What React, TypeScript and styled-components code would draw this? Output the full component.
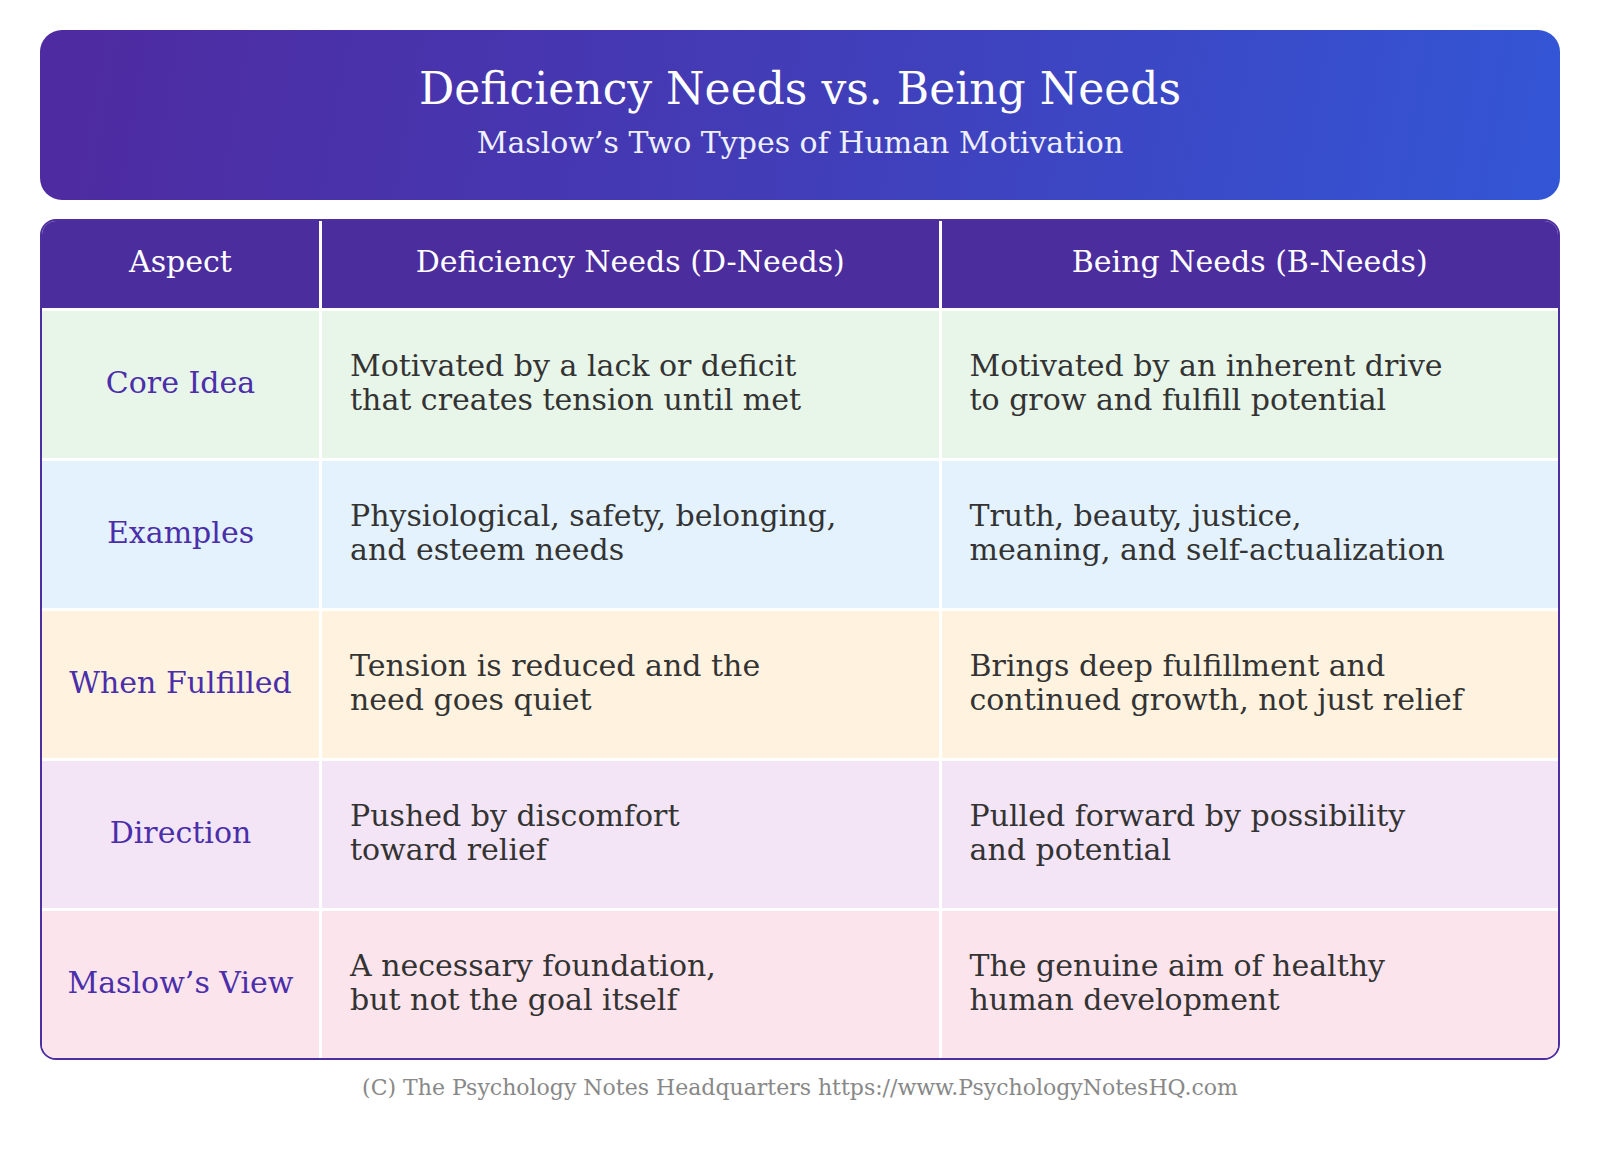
import styled, { createGlobalStyle } from 'styled-components';

const GlobalStyle = createGlobalStyle`
  body {
    margin: 0;
    background: #ffffff;
    font-family: Georgia, "DejaVu Serif", serif;
  }
`;

interface RowData {
  aspect: string;
  deficiency: string[];
  being: string[];
  tint: string;
}

const rows: RowData[] = [
  {
    aspect: 'Core Idea',
    deficiency: ['Motivated by a lack or deficit', 'that creates tension until met'],
    being: ['Motivated by an inherent drive', 'to grow and fulfill potential'],
    tint: '#e8f5e9',
  },
  {
    aspect: 'Examples',
    deficiency: ['Physiological, safety, belonging,', 'and esteem needs'],
    being: ['Truth, beauty, justice,', 'meaning, and self-actualization'],
    tint: '#e3f2fd',
  },
  {
    aspect: 'When Fulfilled',
    deficiency: ['Tension is reduced and the', 'need goes quiet'],
    being: ['Brings deep fulfillment and', 'continued growth, not just relief'],
    tint: '#fff3e0',
  },
  {
    aspect: 'Direction',
    deficiency: ['Pushed by discomfort', 'toward relief'],
    being: ['Pulled forward by possibility', 'and potential'],
    tint: '#f3e5f5',
  },
  {
    aspect: 'Maslow\u2019s View',
    deficiency: ['A necessary foundation,', 'but not the goal itself'],
    being: ['The genuine aim of healthy', 'human development'],
    tint: '#fce4ec',
  },
];

const App = () => {
  return (
    <Page>
      <GlobalStyle />
      <Banner>
        <Title>Deficiency Needs vs. Being Needs</Title>
        <Subtitle>Maslow&rsquo;s Two Types of Human Motivation</Subtitle>
      </Banner>
      <Table>
        <HeadRow>
          <HeadCell>Aspect</HeadCell>
          <HeadCell>Deficiency Needs (D-Needs)</HeadCell>
          <HeadCell>Being Needs (B-Needs)</HeadCell>
        </HeadRow>
        {rows.map((row) => (
          <Row key={row.aspect} $tint={row.tint}>
            <AspectCell>{row.aspect}</AspectCell>
            <TextCell>
              {row.deficiency.map((line) => (
                <Line key={line}>{line}</Line>
              ))}
            </TextCell>
            <TextCell>
              {row.being.map((line) => (
                <Line key={line}>{line}</Line>
              ))}
            </TextCell>
          </Row>
        ))}
      </Table>
      <Footer>(C) The Psychology Notes Headquarters https://www.PsychologyNotesHQ.com</Footer>
    </Page>
  );
};

export default App;

const Page = styled.div`
  width: 1600px;
  height: 1150px;
  box-sizing: border-box;
  padding: 30px 40px 0;
  display: flex;
  flex-direction: column;
`;

const Banner = styled.header`
  height: 170px;
  border-radius: 22px;
  background: linear-gradient(100deg, #4f2aa0 0%, #423db8 50%, #3356d6 100%);
  color: #ffffff;
  display: flex;
  flex-direction: column;
  align-items: center;
  justify-content: center;
  padding-bottom: 6px;
  box-sizing: border-box;
`;

const Title = styled.h1`
  margin: 0;
  font-weight: 400;
  font-size: 44px;
  line-height: 1.2;
`;

const Subtitle = styled.p`
  margin: 10px 0 0;
  font-size: 30px;
  line-height: 1.2;
  color: #eef0ff;
`;

const Table = styled.div`
  margin-top: 19px;
  display: flex;
  flex-direction: column;
  border: 2px solid #4c2fa0;
  border-radius: 16px;
  overflow: hidden;
  background: #ffffff;
`;

const HeadRow = styled.div`
  display: grid;
  grid-template-columns: 277px 1fr 1fr;
  height: 87px;
  background: #4c2d9e;
`;

const HeadCell = styled.div`
  color: #ffffff;
  font-size: 30px;
  display: flex;
  align-items: center;
  justify-content: center;
  padding-bottom: 7px;
  border-left: 3px solid #ffffff;
  &:first-child {
    border-left: none;
  }
`;

const Row = styled.div<{ $tint: string }>`
  display: grid;
  grid-template-columns: 277px 1fr 1fr;
  height: 150px;
  box-sizing: border-box;
  border-top: 3px solid #ffffff;
  background: ${({ $tint }) => $tint};
`;

const AspectCell = styled.div`
  display: flex;
  align-items: center;
  justify-content: center;
  padding-bottom: 5px;
  color: #4a2eaa;
  font-size: 30px;
`;

const TextCell = styled.div`
  border-left: 3px solid #ffffff;
  display: flex;
  flex-direction: column;
  justify-content: center;
  padding: 0 0 4px 28px;
  color: #333333;
  font-size: 30px;
  line-height: 34px;
`;

const Line = styled.span`
  display: block;
  white-space: nowrap;
`;

const Footer = styled.div`
  margin-top: 15px;
  text-align: center;
  color: #888888;
  font-size: 22px;
`;
